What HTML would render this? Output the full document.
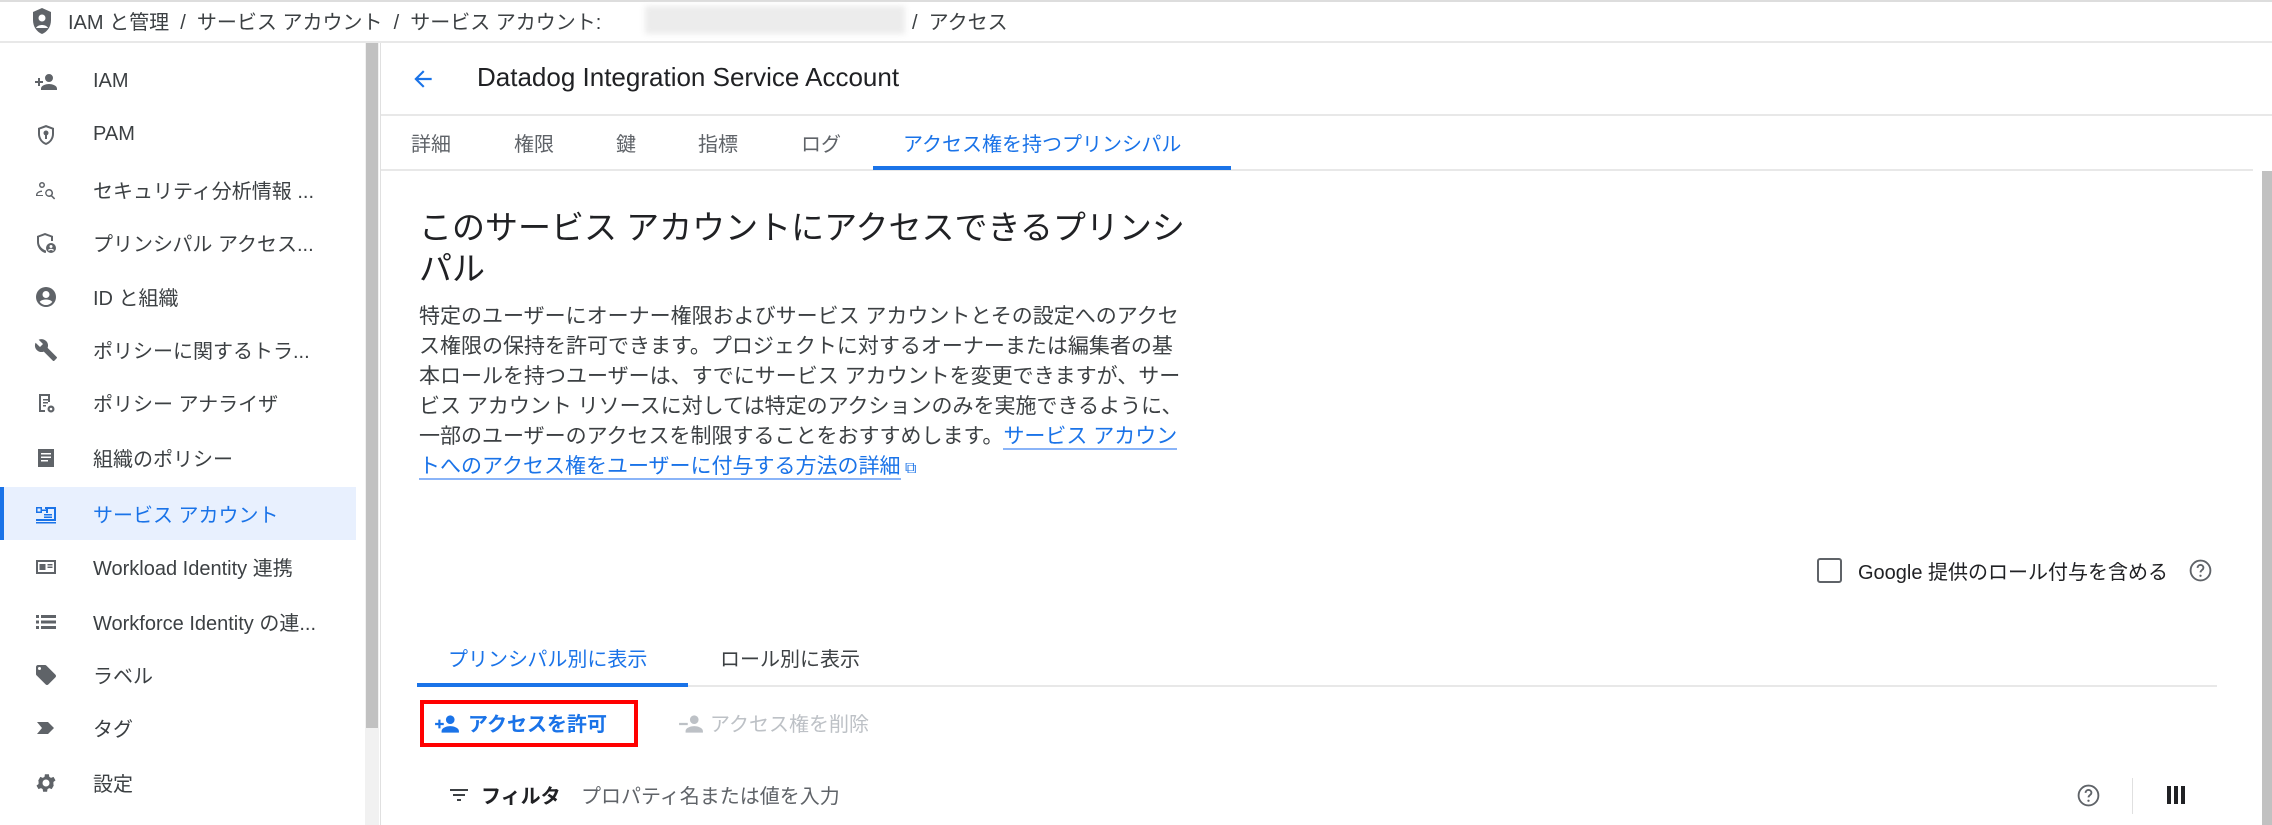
<!DOCTYPE html>
<html><head><meta charset="utf-8"><style>
*{margin:0;padding:0;box-sizing:border-box}
body{width:2272px;height:825px;overflow:hidden;background:#fff;font-family:"Liberation Sans","Noto Sans CJK JP",sans-serif;color:#202124;position:relative}
.a{position:absolute;white-space:nowrap}
.si{position:absolute;left:0;width:355px;height:53px;display:flex;align-items:center}
.si svg{position:absolute;left:34px;width:24px;height:24px;fill:#5f6368}
.si span{position:absolute;left:93px;font-size:20px;color:#3c4043}
.tab{position:absolute;top:128px;font-size:20px;color:#5f6368}
p.l{position:absolute;left:419px;font-size:21px;line-height:30px;color:#3c4043;white-space:nowrap}
.lk{color:#1a73e8;border-bottom:2px solid #8ab4f8}
</style></head><body>
<div class="a" style="left:0;top:0;width:2272px;height:2px;background:#ddd"></div>
<svg class="a" style="left:31px;top:7px" width="22" height="28" viewBox="0 0 22 28"><path d="M11 1L2 5v8c0 7 4 12 9 14 5-2 9-7 9-14V5z" fill="#5f6368"/><circle cx="11" cy="11" r="3.5" fill="#fff"/><path d="M5 21c2-4 10-4 12 0" fill="#fff"/></svg>
<div class="a" style="left:68px;top:6px;font-size:20px;color:#3c4043">IAM と管理 &nbsp;/ &nbsp;サービス アカウント &nbsp;/ &nbsp;サービス アカウント:</div>
<div class="a" style="left:645px;top:6px;width:260px;height:28px;background:#ececec;filter:blur(3px)"></div>
<div class="a" style="left:912px;top:6px;font-size:20px;color:#3c4043">/ &nbsp;アクセス</div>
<div class="a" style="left:0;top:41px;width:2272px;height:2px;background:#e8e8e8"></div>
<div class="si" style="top:55px"><svg viewBox="0 0 24 24"><path d="M1 11h3V8h2v3h3v2H6v3H4v-3H1zM15 12a4 4 0 100-8 4 4 0 000 8zm0 2c-3 0-8 1.5-8 4.5V20h16v-1.5c0-3-5-4.5-8-4.5z"/></svg><span>IAM</span></div>
<div class="si" style="top:108px"><svg viewBox="0 0 24 24"><path d="M12 2L4 5v6c0 5 3.5 9.5 8 11 4.5-1.5 8-6 8-11V5zm0 2.2l6 2.2V11c0 4-2.6 7.6-6 8.9C8.6 18.6 6 15 6 11V6.4z"/><circle cx="12" cy="10" r="2.5"/><path d="M11 12h2v4h-2z"/></svg><span>PAM</span></div>
<div class="si" style="top:163px"><svg viewBox="0 0 24 24"><path d="M8 4a3 3 0 110 6 3 3 0 010-6zm0 1.5a1.5 1.5 0 100 3 1.5 1.5 0 000-3zM2 17c0-3 4-4.5 6-4.5v1.5c-2 0-4.5 1-4.5 2.5v.5H9V18H2zM15 11a4 4 0 013.2 6.4l3 3-1.1 1.1-3-3A4 4 0 1115 11zm0 1.5a2.5 2.5 0 100 5 2.5 2.5 0 000-5z"/></svg><span>セキュリティ分析情報 ...</span></div>
<div class="si" style="top:216px"><svg viewBox="0 0 24 24"><path d="M11 2L3 5v6c0 5 3.5 9.5 8 11l1-.4v-2C8.3 18.4 5 15 5 11V6.3l6-2.2 6 2.2V10h2V5z"/><circle cx="17" cy="17" r="5"/><circle cx="17" cy="15.5" r="1.5" fill="#fff"/><path d="M14.5 19.5c1-1.5 4-1.5 5 0" stroke="#fff" stroke-width="1.3" fill="none"/></svg><span>プリンシパル アクセス...</span></div>
<div class="si" style="top:270px"><svg viewBox="0 0 24 24"><path d="M12 2a10 10 0 100 20 10 10 0 000-20zm0 4a3.5 3.5 0 110 7 3.5 3.5 0 010-7zm0 14c-2.6 0-4.9-1.3-6.3-3.3 1.6-1.6 4-2.2 6.3-2.2s4.7.6 6.3 2.2C16.9 18.7 14.6 20 12 20z"/></svg><span>ID と組織</span></div>
<div class="si" style="top:323px"><svg viewBox="0 0 24 24"><path d="M22.7 19l-9.1-9.1c.9-2.3.4-5-1.5-6.9-2-2-5-2.4-7.4-1.3L9 6 6 9 1.6 4.7C.4 7.1.9 10.1 2.9 12.1c1.9 1.9 4.6 2.4 6.9 1.5l9.1 9.1c.4.4 1 .4 1.4 0l2.3-2.3c.5-.4.5-1.1.1-1.4z"/></svg><span>ポリシーに関するトラ...</span></div>
<div class="si" style="top:376px"><svg viewBox="0 0 24 24"><path d="M5 3h11v8h-2V5H7v14h4v2H5zM9 8h5v1.5H9zm0 3h5v1.5H9zm0 3h3v1.5H9z"/><circle cx="17" cy="18" r="3.5"/><circle cx="17" cy="18" r="1.3" fill="#fff"/></svg><span>ポリシー アナライザ</span></div>
<div class="si" style="top:431px"><svg viewBox="0 0 24 24"><path d="M4 3h16v18H4zM7 7v1.5h10V7zm0 3.5V12h10v-1.5zm0 3.5v1.5h7V14z" fill-rule="evenodd"/></svg><span>組織のポリシー</span></div>
<div class="a" style="left:0;top:487px;width:356px;height:53px;background:#e8f0fe"></div>
<div class="a" style="left:0;top:487px;width:4px;height:53px;background:#1a73e8"></div>
<div class="si" style="top:487px"><svg viewBox="0 0 24 24" style="fill:#1a73e8"><path d="M2 5h6v6H2zm1.5 1.5v3h3v-3zM8 7.5h4V6h2v5h-2V9H8zM11 5h11v14H2v-2h18V7h-9zM10 12h8v1.5h-8zm0 2.5h8V16h-8zM2 20h20v1.5H2z"/></svg><span style="color:#1a73e8">サービス アカウント</span></div>
<div class="si" style="top:540px"><svg viewBox="0 0 24 24"><path d="M2 5h20v14H2zm2 2v10h16V7zm1.5 2h6v6h-6zm8 0h5v1.5h-5zm0 2.5h5V13h-5z" fill-rule="evenodd"/></svg><span>Workload Identity 連携</span></div>
<div class="si" style="top:595px"><svg viewBox="0 0 24 24"><path d="M2 5h3v3H2zm5 0h15v3H7zM2 10.5h3v3H2zm5 0h15v3H7zM2 16h3v3H2zm5 0h15v3H7z"/></svg><span>Workforce Identity の連...</span></div>
<div class="si" style="top:648px"><svg viewBox="0 0 24 24"><path d="M21.4 11.6l-9-9C12 2.2 11.5 2 11 2H4c-1.1 0-2 .9-2 2v7c0 .6.2 1.1.6 1.4l9 9c.4.4.9.6 1.4.6s1-.2 1.4-.6l7-7c.4-.4.6-.9.6-1.4s-.2-1-.6-1.4zM5.5 7a1.5 1.5 0 110-3 1.5 1.5 0 010 3z"/></svg><span>ラベル</span></div>
<div class="si" style="top:701px"><svg viewBox="0 0 24 24"><path d="M3 6h11l6 6-6 6H3l5-6z"/></svg><span>タグ</span></div>
<div class="si" style="top:756px"><svg viewBox="0 0 24 24"><path d="M19.4 13a7.5 7.5 0 000-2l2.1-1.6-2-3.5-2.5 1a7 7 0 00-1.7-1l-.4-2.6h-4l-.4 2.6a7 7 0 00-1.7 1l-2.5-1-2 3.5L4.6 11a7.5 7.5 0 000 2l-2.1 1.6 2 3.5 2.5-1a7 7 0 001.7 1l.4 2.6h4l.4-2.6a7 7 0 001.7-1l2.5 1 2-3.5zM12 15.5a3.5 3.5 0 110-7 3.5 3.5 0 010 7z"/></svg><span>設定</span></div>
<div class="a" style="left:365px;top:43px;width:14px;height:782px;background:#f1f1f1"></div>
<div class="a" style="left:366px;top:43px;width:12px;height:685px;background:#c1c1c1"></div>
<div class="a" style="left:380px;top:43px;width:1px;height:782px;background:#e0e0e0"></div>
<svg class="a" style="left:410px;top:66px" width="26" height="26" viewBox="0 0 24 24"><path d="M20 11H7.8l5.6-5.6L12 4l-8 8 8 8 1.4-1.4L7.8 13H20z" fill="#1a73e8"/></svg>
<div class="a" style="left:477px;top:62px;font-size:26px;color:#202124">Datadog Integration Service Account</div>
<div class="a" style="left:381px;top:114px;width:1891px;height:2px;background:#e8e8e8"></div>
<div class="tab" style="left:411px">詳細</div>
<div class="tab" style="left:514px">権限</div>
<div class="tab" style="left:616px">鍵</div>
<div class="tab" style="left:698px">指標</div>
<div class="tab" style="left:801px">ログ</div>
<div class="tab" style="left:903px;color:#1a73e8">アクセス権を持つプリンシパル</div>
<div class="a" style="left:381px;top:169px;width:1872px;height:2px;background:#e8e8e8"></div>
<div class="a" style="left:873px;top:166px;width:358px;height:4px;background:#1a73e8"></div>
<div class="a" style="left:2262px;top:171px;width:10px;height:654px;background:#c1c1c1"></div>
<div class="a" style="left:419px;top:207px;font-size:33px;line-height:41px;color:#202124">このサービス アカウントにアクセスできるプリンシ<br>パル</div>
<p class="l" style="top:302px">特定のユーザーにオーナー権限およびサービス アカウントとその設定へのアクセ<br>ス権限の保持を許可できます。プロジェクトに対するオーナーまたは編集者の基<br>本ロールを持つユーザーは、すでにサービス アカウントを変更できますが、サー<br>ビス アカウント リソースに対しては特定のアクションのみを実施できるように、<br>一部のユーザーのアクセスを制限することをおすすめします。<span class="lk">サービス アカウン</span><br><span class="lk">トへのアクセス権をユーザーに付与する方法の詳細</span><span style="color:#1a73e8;font-size:16px"> ⧉</span></p>
<div class="a" style="left:1817px;top:558px;width:25px;height:25px;border:2px solid #5f6368;border-radius:3px"></div>
<div class="a" style="left:1858px;top:556px;font-size:20px;color:#202124">Google 提供のロール付与を含める</div>
<svg class="a" style="left:2188px;top:558px" width="25" height="25" viewBox="0 0 24 24"><circle cx="12" cy="12" r="9.5" fill="none" stroke="#5f6368" stroke-width="1.8"/><path d="M9.2 9.5a2.8 2.8 0 015.6 0c0 2-2.8 2.2-2.8 4.3" fill="none" stroke="#5f6368" stroke-width="1.8"/><circle cx="12" cy="17" r="1.1" fill="#5f6368"/></svg>
<div class="a" style="left:448px;top:643px;font-size:20px;color:#1a73e8">プリンシパル別に表示</div>
<div class="a" style="left:720px;top:643px;font-size:20px;color:#3c4043">ロール別に表示</div>
<div class="a" style="left:417px;top:685px;width:1800px;height:2px;background:#e8e8e8"></div>
<div class="a" style="left:417px;top:683px;width:271px;height:4px;background:#1a73e8"></div>
<div class="a" style="left:420px;top:700px;width:218px;height:47px;border:4px solid #f00"></div>
<svg class="a" style="left:434px;top:711px" width="26" height="26" viewBox="0 0 24 24"><path d="M1 11h3V8h2v3h3v2H6v3H4v-3H1zM15 12a4 4 0 100-8 4 4 0 000 8zm0 2c-3 0-8 1.5-8 4.5V20h16v-1.5c0-3-5-4.5-8-4.5z" fill="#1a73e8"/></svg>
<div class="a" style="left:468px;top:708px;font-size:20px;font-weight:bold;color:#1a73e8">アクセスを許可</div>
<svg class="a" style="left:678px;top:711px" width="26" height="26" viewBox="0 0 24 24"><path d="M1 11h8v2H1zM15 12a4 4 0 100-8 4 4 0 000 8zm0 2c-3 0-8 1.5-8 4.5V20h16v-1.5c0-3-5-4.5-8-4.5z" fill="#bdc1c6"/></svg>
<div class="a" style="left:710px;top:708px;font-size:20px;color:#bdc1c6">アクセス権を削除</div>
<svg class="a" style="left:447px;top:783px" width="24" height="24" viewBox="0 0 24 24"><path d="M3 6h18v2H3zm3 5h12v2H6zm4 5h4v2h-4z" fill="#3c4043"/></svg>
<div class="a" style="left:481px;top:780px;font-size:20px;font-weight:bold;color:#202124">フィルタ</div>
<div class="a" style="left:581px;top:780px;font-size:20px;color:#5f6368">プロパティ名または値を入力</div>
<svg class="a" style="left:2076px;top:783px" width="25" height="25" viewBox="0 0 24 24"><circle cx="12" cy="12" r="9.5" fill="none" stroke="#5f6368" stroke-width="1.8"/><path d="M9.2 9.5a2.8 2.8 0 015.6 0c0 2-2.8 2.2-2.8 4.3" fill="none" stroke="#5f6368" stroke-width="1.8"/><circle cx="12" cy="17" r="1.1" fill="#5f6368"/></svg>
<div class="a" style="left:2132px;top:778px;width:1px;height:36px;background:#e0e0e0"></div>
<svg class="a" style="left:2165px;top:784px" width="22" height="22" viewBox="0 0 22 22"><path d="M2 2h4v18H2zm7 0h4v18H9zm7 0h4v18h-4z" fill="#202124"/></svg>
</body></html>
